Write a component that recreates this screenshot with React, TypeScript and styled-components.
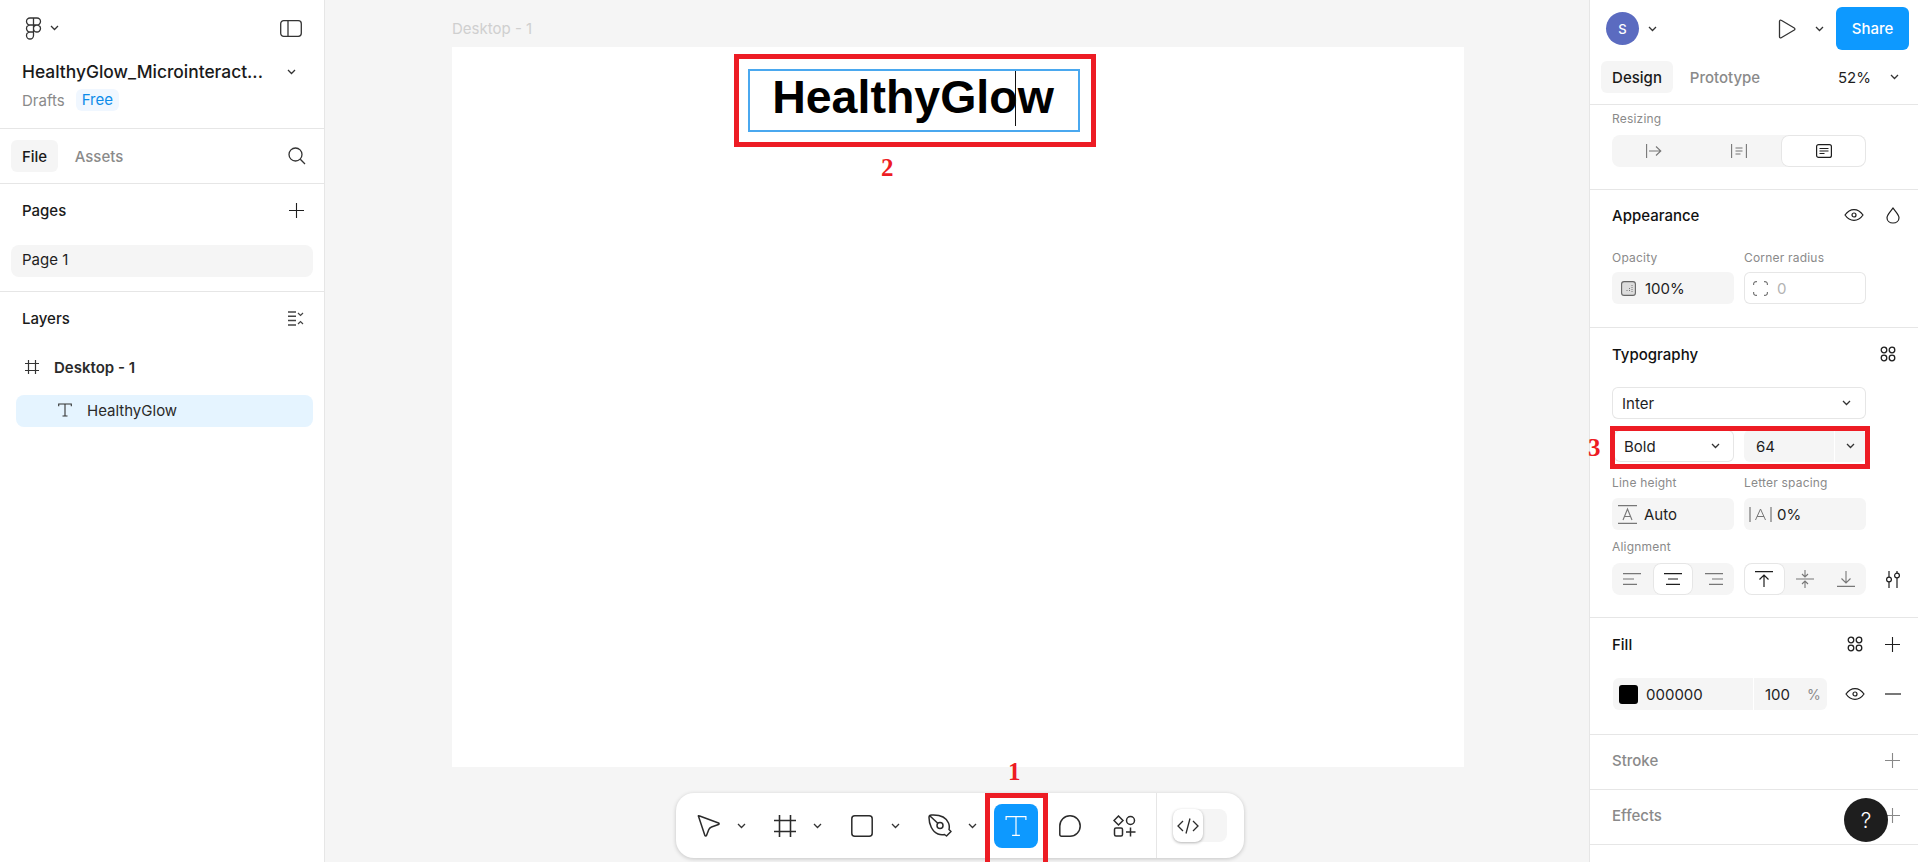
import React from "react";
import styled, { createGlobalStyle } from "styled-components";

const Global = createGlobalStyle`
  html, body { margin: 0; padding: 0; width: 1918px; height: 862px; overflow: hidden; background: #fff; }
  body { font-family: Inter, "Liberation Sans", sans-serif; color: #1e1e1e; }
  * { box-sizing: border-box; }
`;

const Page = styled.div`
  display: flex;
  position: relative;
  width: 1918px;
  height: 862px;
  overflow: hidden;
`;

const LeftPanel = styled.aside`
  width: 325px;
  flex: none;
  border-right: 1px solid #e6e6e6;
  display: flex;
  flex-direction: column;
`;

const Section = styled.div<{ $h: number }>`
  height: ${(p) => p.$h}px;
  flex: none;
  border-bottom: 1px solid #e6e6e6;
`;

const LogoBar = styled.div`
  display: flex;
  align-items: center;
  justify-content: space-between;
  padding: 17px 22px 0 25px;
  height: 39px;
`;

const Row = styled.div<{ $gap?: number; $mt?: number }>`
  display: flex;
  align-items: center;
  gap: ${(p) => p.$gap ?? 0}px;
  margin-top: ${(p) => p.$mt ?? 0}px;
`;

const TitleRow = styled.div`
  display: flex;
  align-items: center;
  justify-content: space-between;
  padding: 21px 28px 0 22px;
`;

const DocTitle = styled.div`
  font-size: 17.4px;
  font-weight: 500;
  line-height: 24px;
  color: #1a1a1a;
`;

const MetaRow = styled.div`
  display: flex;
  align-items: center;
  gap: 11px;
  padding: 5px 0 0 22px;
  font-size: 15px;
  color: #8a8a8a;
`;

const Badge = styled.span`
  background: #f0f7ff;
  color: #0d8ce9;
  border-radius: 6px;
  padding: 0 6px;
  line-height: 22px;
  font-size: 15px;
`;

const TabBar = styled.div<{ $pad: string }>`
  display: flex;
  align-items: center;
  padding: ${(p) => p.$pad};
`;

const Tab = styled.div<{ $active?: boolean; $w: number; $ml?: number }>`
  width: ${(p) => p.$w}px;
  height: 32px;
  margin-left: ${(p) => p.$ml ?? 0}px;
  display: flex;
  align-items: center;
  justify-content: center;
  border-radius: 6px;
  font-size: 15px;
  font-weight: 500;
  background: ${(p) => (p.$active ? "#f5f5f5" : "transparent")};
  color: ${(p) => (p.$active ? "#1a1a1a" : "#8a8a8a")};
`;

const Spacer = styled.div`
  flex: 1;
`;

const SideHead = styled.div<{ $pt: number; $pb?: number }>`
  display: flex;
  align-items: center;
  justify-content: space-between;
  padding: ${(p) => p.$pt}px 20px ${(p) => p.$pb ?? 0}px 22px;
  font-size: 15px;
  font-weight: 500;
  color: #1a1a1a;
`;

const PageRow = styled.div`
  height: 32px;
  margin: 25px 11px 0;
  padding: 0 0 3px 11px;
  display: flex;
  align-items: center;
  border-radius: 8px;
  background: #f5f5f5;
  font-size: 15px;
  color: #1e1e1e;
`;

const LayerRow = styled.div<{ $selected?: boolean; $bold?: boolean }>`
  height: 32px;
  margin: 0 11px ${(p) => (p.$selected ? 0 : 12)}px 16px;
  display: flex;
  align-items: center;
  border-radius: 8px;
  gap: 15px;
  padding-left: ${(p) => (p.$selected ? 42 : 9)}px;
  padding-bottom: ${(p) => (p.$selected ? 2 : 0)}px;
  background: ${(p) => (p.$selected ? "#e5f4ff" : "transparent")};
  font-size: 15px;
  font-weight: ${(p) => (p.$bold ? 600 : 400)};
  color: #2a2a2a;
`;

const Canvas = styled.main`
  flex: 1;
  background: #f5f5f5;
  position: relative;
  padding: 20px 0 0 127px;
`;

const FrameLabel = styled.div`
  font-size: 15px;
  line-height: 18px;
  height: 27px;
  color: #cfcfcf;
`;

const Artboard = styled.div`
  width: 1012px;
  height: 720px;
  background: #fff;
  padding: 22px 0 0 296px;
`;

const TextBox = styled.div`
  width: 332px;
  height: 63px;
  border: 2px solid #4aa8ef;
  padding: 0 2px 7px 0;
  display: flex;
  align-items: center;
  justify-content: center;
  font-family: "Liberation Sans", Arial, sans-serif;
  font-size: 46.5px;
  font-weight: 700;
  color: #000;
  line-height: 1;
`;

const Caret = styled.span`
  width: 1px;
  height: 55px;
  flex: none;
  align-self: flex-start;
  background: #111;
  margin: 0 2px 0 -3px;
`;

const RedBox = styled.div<{ $x: number; $y: number; $w: number; $h: number }>`
  position: absolute;
  left: ${(p) => p.$x}px;
  top: ${(p) => p.$y}px;
  width: ${(p) => p.$w}px;
  height: ${(p) => p.$h}px;
  border: 5px solid #ed1c24;
  pointer-events: none;
`;

const RedNum = styled.div<{ $x: number; $y: number }>`
  position: absolute;
  left: ${(p) => p.$x}px;
  top: ${(p) => p.$y}px;
  font-family: "Liberation Serif", serif;
  font-weight: 700;
  font-size: 25px;
  line-height: 24px;
  color: #ed1c24;
`;

const Toolbar = styled.div`
  position: absolute;
  left: 351px;
  top: 793px;
  width: 568px;
  height: 65px;
  background: #fff;
  border-radius: 18px;
  box-shadow: 0 1px 4px rgba(0, 0, 0, 0.2);
  display: flex;
  align-items: center;
  padding-left: 21px;
`;

const ToolGroup = styled.div<{ $w: number; $gap: number }>`
  width: ${(p) => p.$w}px;
  display: flex;
  align-items: center;
  gap: ${(p) => p.$gap}px;
  flex: none;
`;

const ToolIcon = styled.div<{ $active?: boolean; $ml?: number }>`
  width: 44px;
  height: 44px;
  flex: none;
  margin-left: ${(p) => p.$ml ?? 0}px;
  display: flex;
  align-items: center;
  justify-content: center;
  border-radius: 8px;
  background: ${(p) => (p.$active ? "#0d99ff" : "transparent")};
  color: ${(p) => (p.$active ? "#fff" : "#2b2b2b")};
`;

const ToolDivider = styled.div`
  width: 1px;
  align-self: stretch;
  margin-left: 10px;
  background: #e6e6e6;
  flex: none;
`;

const CodeToggle = styled.div`
  margin-left: 16px;
  width: 54px;
  height: 33px;
  border-radius: 8px;
  background: #f5f5f5;
`;

const CodeKnob = styled.div`
  width: 30px;
  height: 33px;
  background: #fff;
  border-radius: 8px;
  box-shadow: 0 1px 3px rgba(0, 0, 0, 0.3);
  display: flex;
  align-items: center;
  justify-content: center;
  color: #2b2b2b;
`;

const RightPanel = styled.aside`
  width: 329px;
  flex: none;
  border-left: 1px solid #e6e6e6;
  display: flex;
  flex-direction: column;
  position: relative;
`;

const TopBar = styled.div`
  height: 57px;
  display: flex;
  align-items: center;
  padding: 0 9px 0 16px;
`;

const Avatar = styled.div`
  width: 33px;
  height: 33px;
  border-radius: 50%;
  background: #5b6bc0;
  color: #fff;
  display: flex;
  align-items: center;
  justify-content: center;
  font-size: 13px;
  font-weight: 500;
  margin-right: 9px;
`;

const PlayChevron = styled.div`
  display: flex;
  margin: 0 12px 0 19px;
`;

const ShareBtn = styled.div`
  width: 73px;
  height: 43px;
  background: #0d99ff;
  color: #fff;
  border-radius: 6px;
  display: flex;
  align-items: center;
  justify-content: center;
  font-size: 15px;
  font-weight: 500;
`;

const ZoomValue = styled.div`
  font-size: 15px;
  color: #1e1e1e;
  margin-right: 19px;
`;

const ZoomChevron = styled.div`
  display: flex;
  margin-right: 19px;
`;

const Label = styled.div<{ $mt?: number }>`
  font-size: 12px;
  letter-spacing: 0.2px;
  line-height: 16px;
  margin-top: ${(p) => p.$mt ?? 0}px;
  color: #8a8a8a;
`;

const PanelSection = styled.div<{ $h: number; $pad?: string }>`
  height: ${(p) => p.$h}px;
  flex: none;
  border-bottom: 1px solid #e6e6e6;
  padding: ${(p) => p.$pad ?? "0 22px"};
`;

const PanelHead = styled.div<{ $muted?: boolean }>`
  display: flex;
  align-items: center;
  justify-content: space-between;
  height: 24px;
  font-size: 15px;
  font-weight: 500;
  color: ${(p) => (p.$muted ? "#8a8a8a" : "#111")};
`;

const Seg = styled.div<{ $w: number; $mt?: number }>`
  width: ${(p) => p.$w}px;
  height: 32px;
  margin-top: ${(p) => p.$mt ?? 0}px;
  border-radius: 8px;
  background: #f5f5f5;
  display: flex;
  flex: none;
`;

const SegItem = styled.div<{ $on?: boolean }>`
  flex: 1;
  display: flex;
  align-items: center;
  justify-content: center;
  border-radius: 8px;
  background: ${(p) => (p.$on ? "#fff" : "transparent")};
  box-shadow: ${(p) => (p.$on ? "inset 0 0 0 1px #e6e6e6" : "none")};
  color: ${(p) => (p.$on ? "#1e1e1e" : "#8a8a8a")};
`;

const Grid = styled.div<{ $mt?: number; $col1?: number; $ml?: number }>`
  display: grid;
  grid-template-columns: ${(p) => p.$col1 ?? 122}px 122px;
  column-gap: 10px;
  margin-top: ${(p) => p.$mt ?? 0}px;
  margin-left: ${(p) => p.$ml ?? 0}px;
`;

const Field = styled.div<{ $outlined?: boolean; $w?: number; $gap?: number; $pl?: number; $mt?: number }>`
  height: 32px;
  ${(p) => (p.$w ? `width: ${p.$w}px;` : "")}
  margin-top: ${(p) => p.$mt ?? 0}px;
  border-radius: 6px;
  background: ${(p) => (p.$outlined ? "#fff" : "#f5f5f5")};
  box-shadow: ${(p) => (p.$outlined ? "inset 0 0 0 1px #e6e6e6" : "none")};
  display: flex;
  align-items: center;
  gap: ${(p) => p.$gap ?? 9}px;
  padding-left: ${(p) => p.$pl ?? 9}px;
  font-size: 15px;
  color: #1e1e1e;
  flex: none;
`;

const FaintValue = styled.span`
  color: #b3b3b3;
`;

const Push = styled.div<{ $pr?: number }>`
  margin-left: auto;
  padding-right: ${(p) => p.$pr ?? 0}px;
  display: flex;
  align-items: center;
`;

const SizeChevron = styled.div`
  width: 32px;
  height: 32px;
  margin-left: auto;
  border-left: 1px solid #fff;
  display: flex;
  align-items: center;
  justify-content: center;
`;

const Icons = styled.div<{ $gap: number; $ml?: number }>`
  display: flex;
  align-items: center;
  gap: ${(p) => p.$gap}px;
  margin-left: ${(p) => p.$ml ?? 0}px;
`;

const FillRow = styled.div`
  display: flex;
  align-items: center;
  margin-top: 22px;
`;

const FillField = styled.div`
  width: 214px;
  height: 32px;
  border-radius: 6px;
  background: #f5f5f5;
  display: flex;
  align-items: center;
  font-size: 15px;
  margin-left: 1px;
  padding-left: 6px;
  flex: none;
`;

const Swatch = styled.div`
  width: 19px;
  height: 19px;
  border-radius: 3px;
  background: #000;
  margin-right: 8px;
`;

const FillHex = styled.div`
  width: 108px;
  height: 32px;
  display: flex;
  align-items: center;
  border-right: 1px solid #fff;
`;

const FillPct = styled.div`
  flex: 1;
  display: flex;
  align-items: center;
  padding-left: 11px;
  gap: 17px;
`;

const PctSign = styled.span`
  color: #8a8a8a;
  font-size: 14px;
`;

const TuneSlot = styled.div`
  display: flex;
  margin-left: 19px;
`;

const Help = styled.div`
  position: absolute;
  left: 254px;
  top: 798px;
  width: 44px;
  height: 44px;
  border-radius: 50%;
  background: #1e1e1e;
  color: #fff;
  display: flex;
  align-items: center;
  justify-content: center;
  font-size: 21px;
  font-weight: 300;
`;

type IP = { s?: number; c?: string; w?: number };

const Chevron = ({ c = "#333" }: IP) => (
  <svg width="9" height="6" viewBox="0 0 9 6" fill="none"><path d="M1 1l3.500 3.500L8 1" stroke={c} strokeWidth="1.3" /></svg>
);
const Plus = ({ c = "#1e1e1e", s = 15 }: IP) => (
  <svg width={s} height={s} viewBox="0 0 15 15" fill="none"><path d="M7.500 0v15M0 7.500h15" stroke={c} strokeWidth="1.1" /></svg>
);
const Eye = () => (
  <svg width="20" height="14" viewBox="0 0 20 14" fill="none" stroke="#1e1e1e" strokeWidth="1.2">
    <path d="M1 7c2.500-3.600 5.500-5.400 9-5.400S16.500 3.400 19 7c-2.500 3.600-5.500 5.400-9 5.400S3.500 10.600 1 7z" />
    <circle cx="10" cy="7" r="2" />
  </svg>
);
const Styles = ({ s = 16 }: IP) => (
  <svg width={s} height={s} viewBox="0 0 16 16" fill="none" stroke="#1e1e1e" strokeWidth="1.3">
    <circle cx="4" cy="4" r="2.800" /><circle cx="12" cy="4" r="2.800" /><circle cx="4" cy="12" r="2.800" /><circle cx="12" cy="12" r="2.800" />
  </svg>
);
const TGlyph = ({ c = "#333", s = 14, w = 1.1 }: IP) => (
  <svg width={s} height={s} viewBox="0 0 14 14" fill="none" stroke={c} strokeWidth={w}>
    <path d="M7 1v12M4.500 13h5M.7 3.200V1h12.600v2.200" />
  </svg>
);
const FigmaLogo = () => (
  <svg width="17" height="23" viewBox="0 0 17 23" fill="none" stroke="#333" strokeWidth="1.3">
    <path d="M8.500 1H5a3.500 3.500 0 0 0 0 7h3.500zM8.500 1H12a3.500 3.500 0 0 1 0 7H8.500zM8.500 8H5a3.500 3.500 0 0 0 0 7h3.500zM8.500 15H5a3.500 3.500 0 1 0 3.500 3.500zM8.500 11.500a3.500 3.500 0 1 1 7 0 3.500 3.500 0 0 1-7 0z" />
  </svg>
);
const SidePanelIcon = () => (
  <svg width="22" height="17" viewBox="0 0 22 17" fill="none" stroke="#333" strokeWidth="1.3">
    <rect x=".7" y=".7" width="20.600" height="15.600" rx="3" /><path d="M8 .7v15.600" />
  </svg>
);
const Search = () => (
  <svg width="18" height="18" viewBox="0 0 18 18" fill="none" stroke="#333" strokeWidth="1.3">
    <circle cx="7.500" cy="7.500" r="6.500" /><path d="M12.300 12.300L17 17" />
  </svg>
);
const CollapseLayers = () => (
  <svg width="16" height="15" viewBox="0 0 16 15" fill="none" stroke="#444" strokeWidth="1.5">
    <path d="M0 1h8M0 5.300h8M0 9.600h8M0 14h8" /><path d="M10 2l2.500 2.500L15 2M10 13l2.500-2.500L15 13" strokeWidth="1.2" />
  </svg>
);
const FrameGlyph = ({ s = 14, c = "#333", w = 1.2 }: IP) => (
  <svg width={s} height={s} viewBox="0 0 14 14" fill="none" stroke={c} strokeWidth={w}>
    <path d="M3.500 0v14M10.500 0v14M0 3.500h14M0 10.500h14" />
  </svg>
);
const Play = () => (
  <svg width="18" height="20" viewBox="0 0 18 20" fill="none" stroke="#333" strokeWidth="1.3" strokeLinejoin="round">
    <path d="M1.500 2.300c0-1 .9-1.500 1.700-1L16.300 9c.8.500.8 1.500 0 2L3.200 18.700c-.8.500-1.700 0-1.700-1z" />
  </svg>
);
const Arrow = () => (
  <svg width="16" height="14" viewBox="0 0 16 14" fill="none" stroke="#777" strokeWidth="1.1"><path d="M.6 0v14M3 7h12M10 2.500L14.800 7 10 11.500" /></svg>
);
const HugH = () => (
  <svg width="16" height="14" viewBox="0 0 16 14" fill="none" stroke="#777" strokeWidth="1.1"><path d="M.6 0v14M15.400 0v14M4.500 4h7M4.500 7h7M4.500 10h5" /></svg>
);
const FixedBox = () => (
  <svg width="16" height="14" viewBox="0 0 16 14" fill="none" stroke="#1e1e1e" strokeWidth="1.2"><rect x=".6" y=".6" width="14.800" height="12.800" rx="2" /><path d="M3.500 4.500h9M3.500 7h9M3.500 9.500h5" /></svg>
);
const Drop = () => (
  <svg width="14" height="17" viewBox="0 0 14 17" fill="none" stroke="#1e1e1e" strokeWidth="1.2"><path d="M7 1C5 4 1 7.500 1 10.700 1 14 3.700 16 7 16s6-2 6-5.300C13 7.500 9 4 7 1z" /></svg>
);
const OpacityIcon = () => (
  <svg width="15" height="15" viewBox="0 0 15 15" fill="none"><rect x=".6" y=".6" width="13.800" height="13.800" rx="2.500" stroke="#666" strokeWidth="1.1" fill="#ddd" /><path d="M11 4v7M8.500 7v4M6 9v2" stroke="#777" strokeDasharray="1 1" /></svg>
);
const CornerIcon = () => (
  <svg width="15" height="15" viewBox="0 0 15 15" fill="none" stroke="#777" strokeWidth="1.2"><path d="M.6 4V3a2.400 2.400 0 0 1 2.400-2.400h1M11 .6h1A2.400 2.400 0 0 1 14.400 3v1M14.400 11v1a2.400 2.400 0 0 1-2.400 2.400h-1M4 14.400H3A2.400 2.400 0 0 1 .6 12v-1" /></svg>
);
const LineH = () => (
  <svg width="19" height="19" viewBox="0 0 19 19" fill="none" stroke="#777" strokeWidth="1.1"><path d="M0 .6h19M0 18.400h19" strokeWidth="1.2" /><path d="M5 15L9.500 4 14 15M6.500 11.500h6" /></svg>
);
const LetterS = () => (
  <svg width="23" height="15" viewBox="0 0 23 15" fill="none" stroke="#777" strokeWidth="1.2"><path d="M1 0v15M22 0v15" /><path d="M6.500 13L11.500 2l5 11M8 9.500h7" strokeWidth="1" /></svg>
);
const AlignH = ({ kind, on }: { kind: "l" | "c" | "r"; on?: boolean }) => {
  const c = on ? "#1e1e1e" : "#777";
  const d = kind === "l" ? "M0 .6h18M0 6h11M0 11.400h14" : kind === "c" ? "M0 .6h18M4 6h10M2 11.400h14" : "M0 .6h18M7 6h11M4 11.400h14";
  return <svg width="18" height="12" viewBox="0 0 18 12" fill="none" stroke={c} strokeWidth="1.2"><path d={d} /></svg>;
};
const AlignTop = () => (
  <svg width="18" height="16" viewBox="0 0 18 16" fill="none" stroke="#1e1e1e" strokeWidth="1.2"><path d="M0 .6h18M9 4v12M4.500 8.500L9 4l4.500 4.500" /></svg>
);
const AlignMid = () => (
  <svg width="18" height="18" viewBox="0 0 18 18" fill="none" stroke="#777" strokeWidth="1.1"><path d="M0 9h18M9 0v6.500M6 4l3 3 3-3M9 18v-6.500M6 14l3-3 3 3" /></svg>
);
const AlignBot = () => (
  <svg width="18" height="16" viewBox="0 0 18 16" fill="none" stroke="#777" strokeWidth="1.1"><path d="M0 15.400h18M9 0v12M4.500 7.500L9 12l4.500-4.500" /></svg>
);
const Tune = () => (
  <svg width="16" height="17" viewBox="0 0 16 17" fill="none" stroke="#1e1e1e" strokeWidth="1.2"><path d="M4 0v6M4 11v6M12 0v2M12 7v10" /><circle cx="4" cy="8.500" r="2.400" /><circle cx="12" cy="4.500" r="2.400" /></svg>
);
const Minus = () => (
  <svg width="16" height="2" viewBox="0 0 16 2"><path d="M0 1h16" stroke="#1e1e1e" strokeWidth="1.2" /></svg>
);
const Cursor = () => (
  <svg width="23" height="22" viewBox="0 0 23 22" fill="none" stroke="#2b2b2b" strokeWidth="1.5" strokeLinejoin="round">
    <path d="M1.500 1.300c-.3-.4 0-.8.500-.6l19.500 7.300c.8.300.8 1.300 0 1.500l-7 2.500c-1.300.5-2.300 1.400-2.800 2.700L9.500 20.500c-.3.800-1.300.8-1.600 0z" />
  </svg>
);
const RectTool = () => (
  <svg width="22" height="22" viewBox="0 0 22 22" fill="none" stroke="#2b2b2b" strokeWidth="1.5"><rect x=".8" y=".8" width="20.400" height="20.400" rx="3" /></svg>
);
const Pen = () => (
  <svg width="24" height="24" viewBox="0 0 24 24" fill="none" stroke="#2b2b2b" strokeWidth="1.5" strokeLinejoin="round">
    <path d="M1 3.500c0-1.500 1-2.500 2.500-2.500h2C11 1 18 3 20.500 9c.8 2 1 4.500.5 6.500l2 2-4.500 4.500-2-1.500c-2.500.5-4.500.3-6.500-.5C4 17.500 1 10 1 3.500z" /><circle cx="12" cy="11.500" r="3" /><path d="M2 2l7.800 7.300" />
  </svg>
);
const Bubble = () => (
  <svg width="22" height="22" viewBox="0 0 22 22" fill="none" stroke="#2b2b2b" strokeWidth="1.5" strokeLinejoin="round">
    <path d="M.8 19.500V11C.8 5.300 5.300.8 11 .8s10.200 4.500 10.200 10.200S16.700 21.200 11 21.200H2.500c-1 0-1.700-.7-1.700-1.700z" />
  </svg>
);
const Actions = () => (
  <svg width="23" height="22" viewBox="0 0 23 22" fill="none" stroke="#2b2b2b" strokeWidth="1.5">
    <path d="M5.500 1l4.500 4.500L5.500 10 1 5.500z" /><circle cx="17.500" cy="5.500" r="4" /><rect x="1.500" y="13" width="8" height="8" rx="1.500" /><path d="M17.500 12.500v9M13 17h9.500" />
  </svg>
);
const CodeIcon = () => (
  <svg width="22" height="16" viewBox="0 0 22 16" fill="none" stroke="#2b2b2b" strokeWidth="1.3"><path d="M6 3L1 8l5 5M16 3l5 5-5 5M13 .5L9 15.500" /></svg>
);

export default function App() {
  return (
    <Page>
      <Global />
      <LeftPanel>
        <Section $h={129}>
          <LogoBar>
            <Row $gap={8}><FigmaLogo /><Chevron /></Row>
            <SidePanelIcon />
          </LogoBar>
          <TitleRow>
            <DocTitle>HealthyGlow_Microinteract...</DocTitle>
            <Chevron />
          </TitleRow>
          <MetaRow>Drafts<Badge>Free</Badge></MetaRow>
        </Section>
        <Section $h={55}>
          <TabBar $pad="11px 18px 0 11px">
            <Tab $active $w={47}>File</Tab>
            <Tab $w={62} $ml={10}>Assets</Tab>
            <Spacer />
            <Search />
          </TabBar>
        </Section>
        <Section $h={108}>
          <SideHead $pt={17}>Pages<Plus /></SideHead>
          <PageRow>Page 1</PageRow>
        </Section>
        <SideHead $pt={17} $pb={23}>Layers<CollapseLayers /></SideHead>
        <LayerRow $bold><FrameGlyph />Desktop - 1</LayerRow>
        <LayerRow $selected><TGlyph />HealthyGlow</LayerRow>
      </LeftPanel>

      <Canvas>
        <FrameLabel>Desktop - 1</FrameLabel>
        <Artboard>
          <TextBox>HealthyGlo<Caret />w</TextBox>
        </Artboard>
        <RedBox $x={409} $y={54} $w={362} $h={93} />
        <RedNum $x={556} $y={156}>2</RedNum>
        <Toolbar>
          <ToolGroup $w={77} $gap={17}><Cursor /><Chevron /></ToolGroup>
          <ToolGroup $w={77} $gap={17}><FrameGlyph s={22} c="#2b2b2b" w={1} /><Chevron /></ToolGroup>
          <ToolGroup $w={77} $gap={18}><RectTool /><Chevron /></ToolGroup>
          <ToolGroup $w={66} $gap={16}><Pen /><Chevron /></ToolGroup>
          <ToolIcon $active><TGlyph c="#fff" s={22} w={0.75} /></ToolIcon>
          <ToolIcon $ml={10}><Bubble /></ToolIcon>
          <ToolIcon $ml={10}><Actions /></ToolIcon>
          <ToolDivider />
          <CodeToggle><CodeKnob><CodeIcon /></CodeKnob></CodeToggle>
        </Toolbar>
        <RedBox $x={660} $y={793} $w={63} $h={80} />
        <RedNum $x={683} $y={760}>1</RedNum>
      </Canvas>

      <RightPanel>
        <TopBar>
          <Avatar>S</Avatar><Chevron />
          <Spacer />
          <Play />
          <PlayChevron><Chevron /></PlayChevron>
          <ShareBtn>Share</ShareBtn>
        </TopBar>
        <PanelSection $h={48} $pad="4px 0 0 11px">
          <TabBar $pad="0">
            <Tab $active $w={72}>Design</Tab>
            <Tab $w={70} $ml={17}>Prototype</Tab>
            <Spacer />
            <ZoomValue>52%</ZoomValue>
            <ZoomChevron><Chevron /></ZoomChevron>
          </TabBar>
        </PanelSection>
        <PanelSection $h={85} $pad="6px 0 0 22px">
          <Label>Resizing</Label>
          <Seg $w={254} $mt={8}>
            <SegItem><Arrow /></SegItem>
            <SegItem><HugH /></SegItem>
            <SegItem $on><FixedBox /></SegItem>
          </Seg>
        </PanelSection>
        <PanelSection $h={138} $pad="13px 18px 0 22px">
          <PanelHead>Appearance<Icons $gap={22}><Eye /><Drop /></Icons></PanelHead>
          <Grid $mt={23}><Label>Opacity</Label><Label>Corner radius</Label></Grid>
          <Grid $mt={6}>
            <Field><OpacityIcon />100%</Field>
            <Field $outlined><CornerIcon /><FaintValue>0</FaintValue></Field>
          </Grid>
        </PanelSection>
        <PanelSection $h={290} $pad="14px 22px 0">
          <PanelHead>Typography<Styles /></PanelHead>
          <Field $outlined $w={254} $mt={21} $pl={10}>Inter<Push $pr={15}><Chevron /></Push></Field>
          <Grid $mt={11} $col1={120} $ml={2}>
            <Field $outlined $pl={10}>Bold<Push $pr={14}><Chevron /></Push></Field>
            <Field $pl={12}>64<SizeChevron><Chevron /></SizeChevron></Field>
          </Grid>
          <Grid $mt={13}><Label>Line height</Label><Label>Letter spacing</Label></Grid>
          <Grid $mt={7}>
            <Field $pl={6} $gap={7}><LineH />Auto</Field>
            <Field $pl={5} $gap={5}><LetterS />0%</Field>
          </Grid>
          <Label $mt={9}>Alignment</Label>
          <Row $mt={8}>
            <Grid>
              <Seg $w={122}><SegItem><AlignH kind="l" /></SegItem><SegItem $on><AlignH kind="c" on /></SegItem><SegItem><AlignH kind="r" /></SegItem></Seg>
              <Seg $w={122}><SegItem $on><AlignTop /></SegItem><SegItem><AlignMid /></SegItem><SegItem><AlignBot /></SegItem></Seg>
            </Grid>
            <TuneSlot><Tune /></TuneSlot>
          </Row>
        </PanelSection>
        <PanelSection $h={117} $pad="14px 18px 0 22px">
          <PanelHead>Fill<Icons $gap={22}><Styles /><Plus /></Icons></PanelHead>
          <FillRow>
            <FillField>
              <Swatch />
              <FillHex>000000</FillHex>
              <FillPct>100<PctSign>%</PctSign></FillPct>
            </FillField>
            <Icons $gap={20} $ml={18}><Eye /><Minus /></Icons>
          </FillRow>
        </PanelSection>
        <PanelSection $h={55} $pad="13px 18px 0 22px">
          <PanelHead $muted>Stroke<Plus c="#888" /></PanelHead>
        </PanelSection>
        <PanelSection $h={55} $pad="13px 18px 0 22px">
          <PanelHead $muted>Effects<Plus c="#888" /></PanelHead>
        </PanelSection>
        <Help>?</Help>
      </RightPanel>

      <RedBox $x={1610} $y={426} $w={260} $h={43} />
      <RedNum $x={1588} $y={436}>3</RedNum>
    </Page>
  );
}
